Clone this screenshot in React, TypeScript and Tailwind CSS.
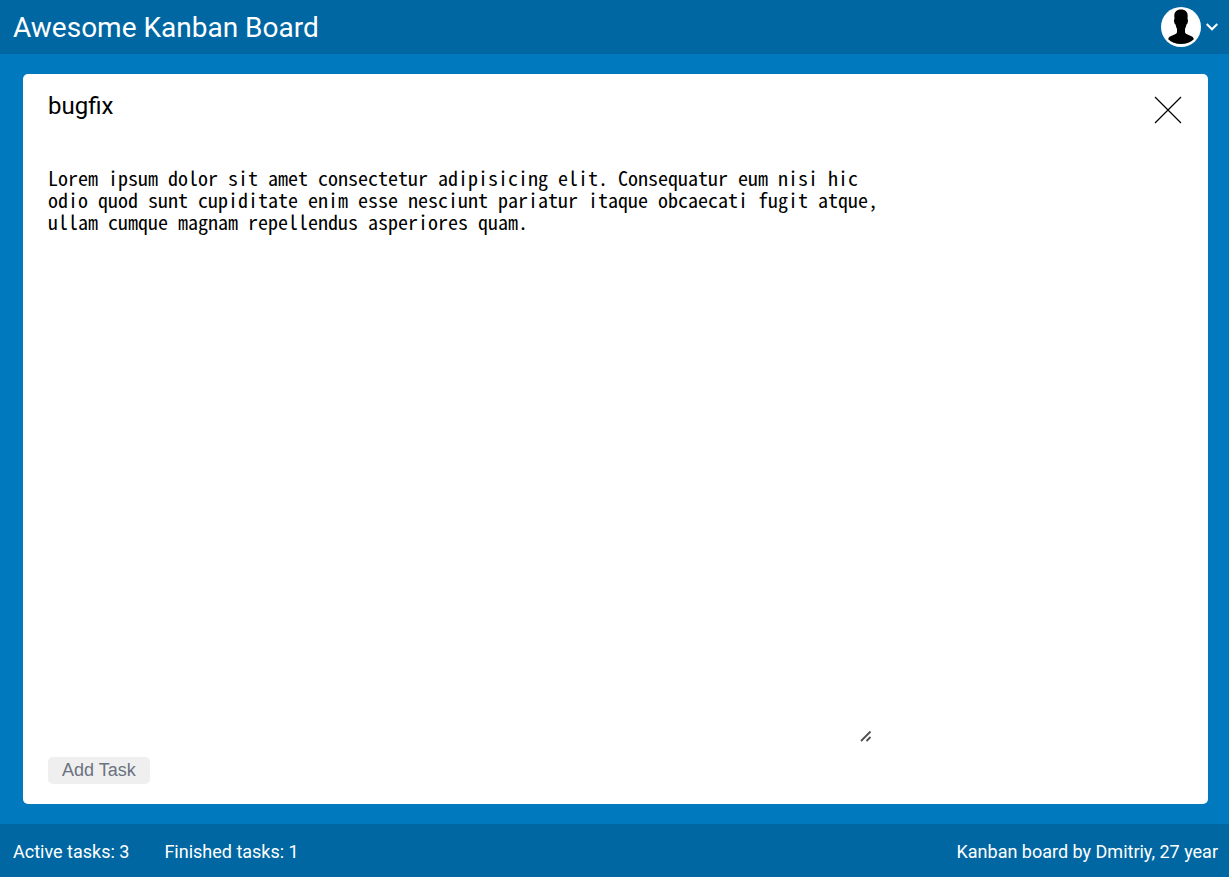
import { useState } from "react";

const initialDescription =
  "Lorem ipsum dolor sit amet consectetur adipisicing elit. Consequatur eum nisi hic odio quod sunt cupiditate enim esse nesciunt pariatur itaque obcaecati fugit atque, ullam cumque magnam repellendus asperiores quam.";

function Avatar() {
  return (
    <svg className="size-10" viewBox="0 0 40 40" aria-hidden="true">
      <circle cx="20" cy="20" r="20" fill="#fff" />
      <path
        d="M20 2.500C15.500 2.500 13.300 5 13.300 9L13.500 12C12.800 12.200 12.900 14 13.300 15.500C13.600 16.800 14 17.300 14.600 17.500C14.900 19.500 15.400 20.800 16 21.800V25C16 26.300 15 27 13.500 27.600L9.500 29.200C8 29.900 7.500 30.800 7.200 32.200C10.200 35.200 14.500 37 20 37S29.800 35.200 32.800 32.200C32.500 30.800 32 29.900 30.500 29.200L26.500 27.600C25 27 24 26.300 24 25V21.800C24.600 20.800 25.100 19.500 25.400 17.500C26 17.300 26.400 16.800 26.700 15.500C27.100 14 27.200 12.200 26.500 12L26.700 9C26.700 5 24.500 2.500 20 2.500Z"
        fill="#000"
      />
    </svg>
  );
}

function Header() {
  return (
    <header className="flex h-[54px] shrink-0 items-center justify-between bg-[#0067a3] pr-[11px] pl-[13px] text-white">
      <h1 className="pt-0.5 text-[28px] leading-8">Awesome Kanban Board</h1>
      <button type="button" aria-label="User menu" className="flex items-center gap-[5px]">
        <Avatar />
        <svg className="h-2 w-3" viewBox="0 0 12 8" fill="none" aria-hidden="true">
          <path d="M.7 1 6 6.300 11.300 1" stroke="#fff" strokeWidth="2" />
        </svg>
      </button>
    </header>
  );
}

function TaskDetails() {
  const [description, setDescription] = useState(initialDescription);
  return (
    <section className="flex flex-1 flex-col items-start rounded-[5px] bg-white px-[25px] py-5">
      <div className="flex w-full items-start justify-between">
        <h2 className="text-2xl leading-6">bugfix</h2>
        <button type="button" aria-label="Close" className="mt-0.5 pr-px">
          <svg className="size-7" viewBox="0 0 28 28" aria-hidden="true">
            <path d="M1 1 27 27M27 1 1 27" stroke="#000" strokeWidth="1.2" />
          </svg>
        </button>
      </div>
      <div className="relative mt-[43px] flex w-[74%] flex-1">
        <textarea
          aria-label="Task description"
          value={description}
          onChange={(event) => setDescription(event.target.value)}
          spellCheck={false}
          className="flex-1 resize-none bg-white font-['Noto_Sans_Mono_CJK_SC','Liberation_Mono',monospace] text-[20px] leading-[22px] text-black outline-none"
        />
        <svg className="absolute right-4 bottom-px size-3" viewBox="0 0 12 12" aria-hidden="true">
          <path d="M1 11 10.500 1.500M6.500 11 10.500 7" stroke="#505050" strokeWidth="1.8" />
        </svg>
      </div>
      <button
        type="button"
        className="mt-3.5 h-[27px] rounded-[5px] bg-[#efefef] px-3.5 font-['Liberation_Sans',sans-serif] text-lg leading-[27px] text-[#6b7280]"
      >
        Add Task
      </button>
    </section>
  );
}

function Footer() {
  return (
    <footer className="flex h-[53px] shrink-0 items-center justify-between bg-[#0067a3] pr-[11px] pl-[13px] pt-0.5 text-lg leading-6 text-white">
      <div className="flex gap-[35px]">
        <p>Active tasks: 3</p>
        <p>Finished tasks: 1</p>
      </div>
      <p>Kanban board by Dmitriy, 27 year</p>
    </footer>
  );
}

export default function App() {
  return (
    <div className="flex min-h-screen flex-col bg-[#0079bf] font-[Roboto,sans-serif] text-black">
      <Header />
      <main className="flex flex-1 flex-col py-5 pr-[21px] pl-[23px]">
        <TaskDetails />
      </main>
      <Footer />
    </div>
  );
}
